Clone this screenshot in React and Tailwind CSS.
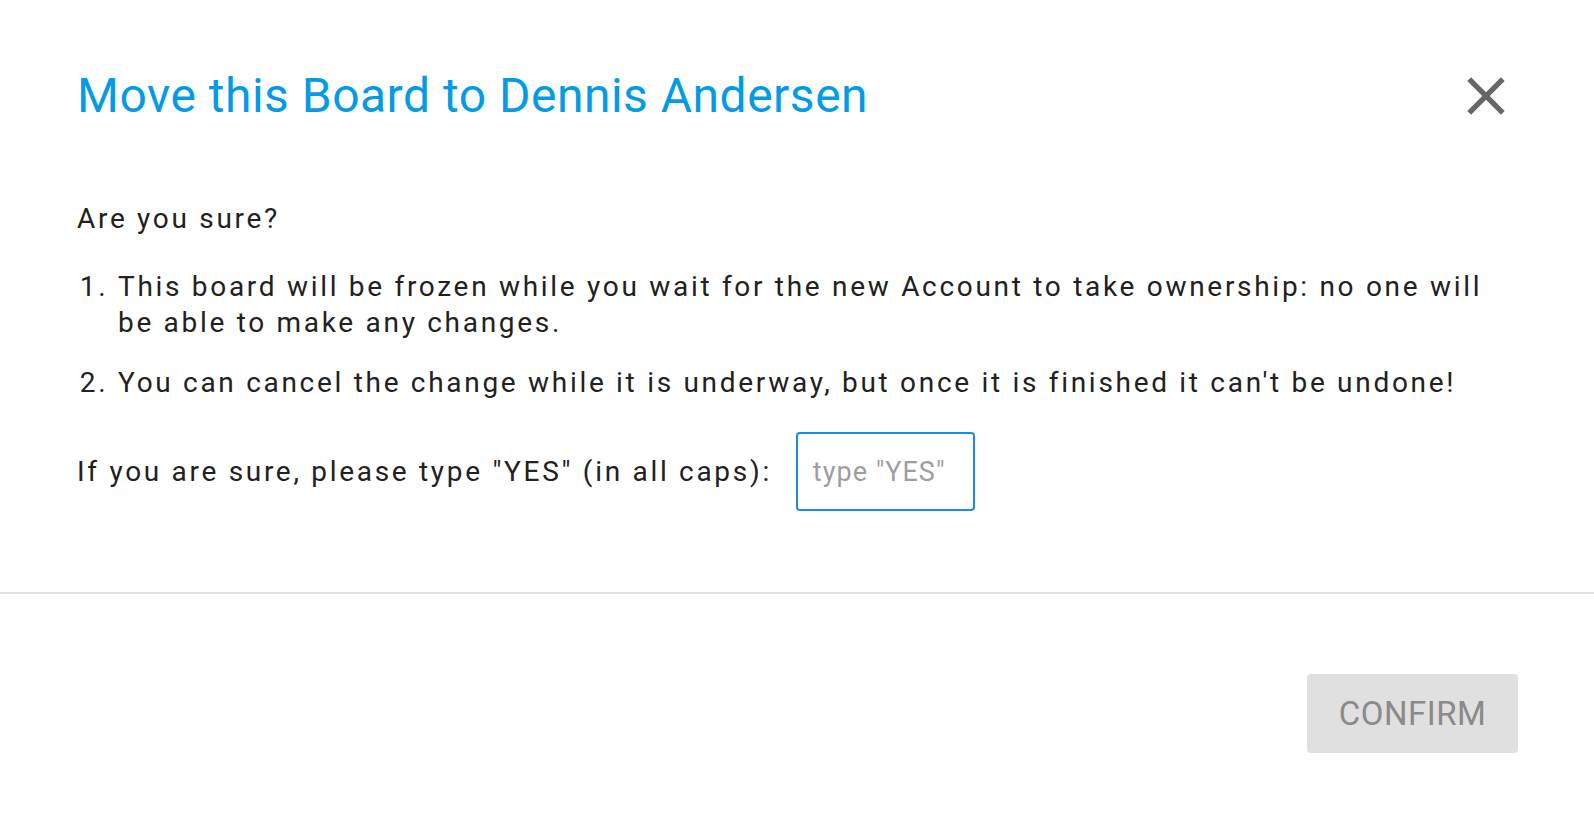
import React from "react";

function CloseIcon() {
  return (
    <svg viewBox="0 0 24 24" className="w-[64px] h-[64px]" fill="#666666">
      <path d="M19 6.41L17.59 5 12 10.59 6.41 5 5 6.41 10.59 12 5 17.59 6.41 19 12 13.41 17.59 19 19 17.59 13.41 12z" />
    </svg>
  );
}

export default function App() {
  return (
    <div
      className="w-full h-[830px] bg-white text-[#212121] overflow-hidden"
      style={{ fontFamily: "Roboto, 'Noto Sans', sans-serif" }}
    >
      {/* Header */}
      <div className="flex items-center justify-between pl-[77px] pr-[76px] pt-[64px]">
        <h2 className="text-[48px] leading-[56px] font-normal tracking-[0.5px] text-[#039be5]">
          Move this Board to Dennis Andersen
        </h2>
        <button className="flex items-center justify-center">
          <CloseIcon />
        </button>
      </div>

      {/* Body */}
      <div className="pl-[77px] pr-[76px] mt-[73px] text-[28px] leading-[36px] tracking-[2.7px]">
        <p>Are you sure?</p>
        <ol className="mt-[32px] list-decimal pl-[41px] flex flex-col gap-[24px]">
          <li>
            This board will be frozen while you wait for the new Account to take ownership: no one will be able to make any changes.
          </li>
          <li>
            You can cancel the change while it is underway, but once it is finished it can't be undone!
          </li>
        </ol>
        <div className="mt-[31px] flex items-baseline gap-[24px]">
          <label className="whitespace-nowrap">If you are sure, please type "YES" (in all caps):</label>
          <input
            autoFocus
            placeholder={'type "YES"'}
            className="w-[179px] h-[79px] shrink-0 border-2 border-[#1e88e5] rounded-[4px] px-[15px] text-[27px] tracking-[1px] outline-none placeholder:text-[#9e9e9e]"
          />
        </div>
      </div>

      {/* Divider */}
      <div className="mt-[81px] border-t-2 border-[#e0e0e0]" />

      {/* Footer */}
      <div className="flex justify-end pr-[76px] pt-[80px]">
        <button className="w-[211px] h-[79px] rounded-[4px] bg-[#e0e0e0] text-[#8a8a8a] text-[33px] tracking-[0.5px] uppercase flex items-center justify-center">
          Confirm
        </button>
      </div>
    </div>
  );
}
